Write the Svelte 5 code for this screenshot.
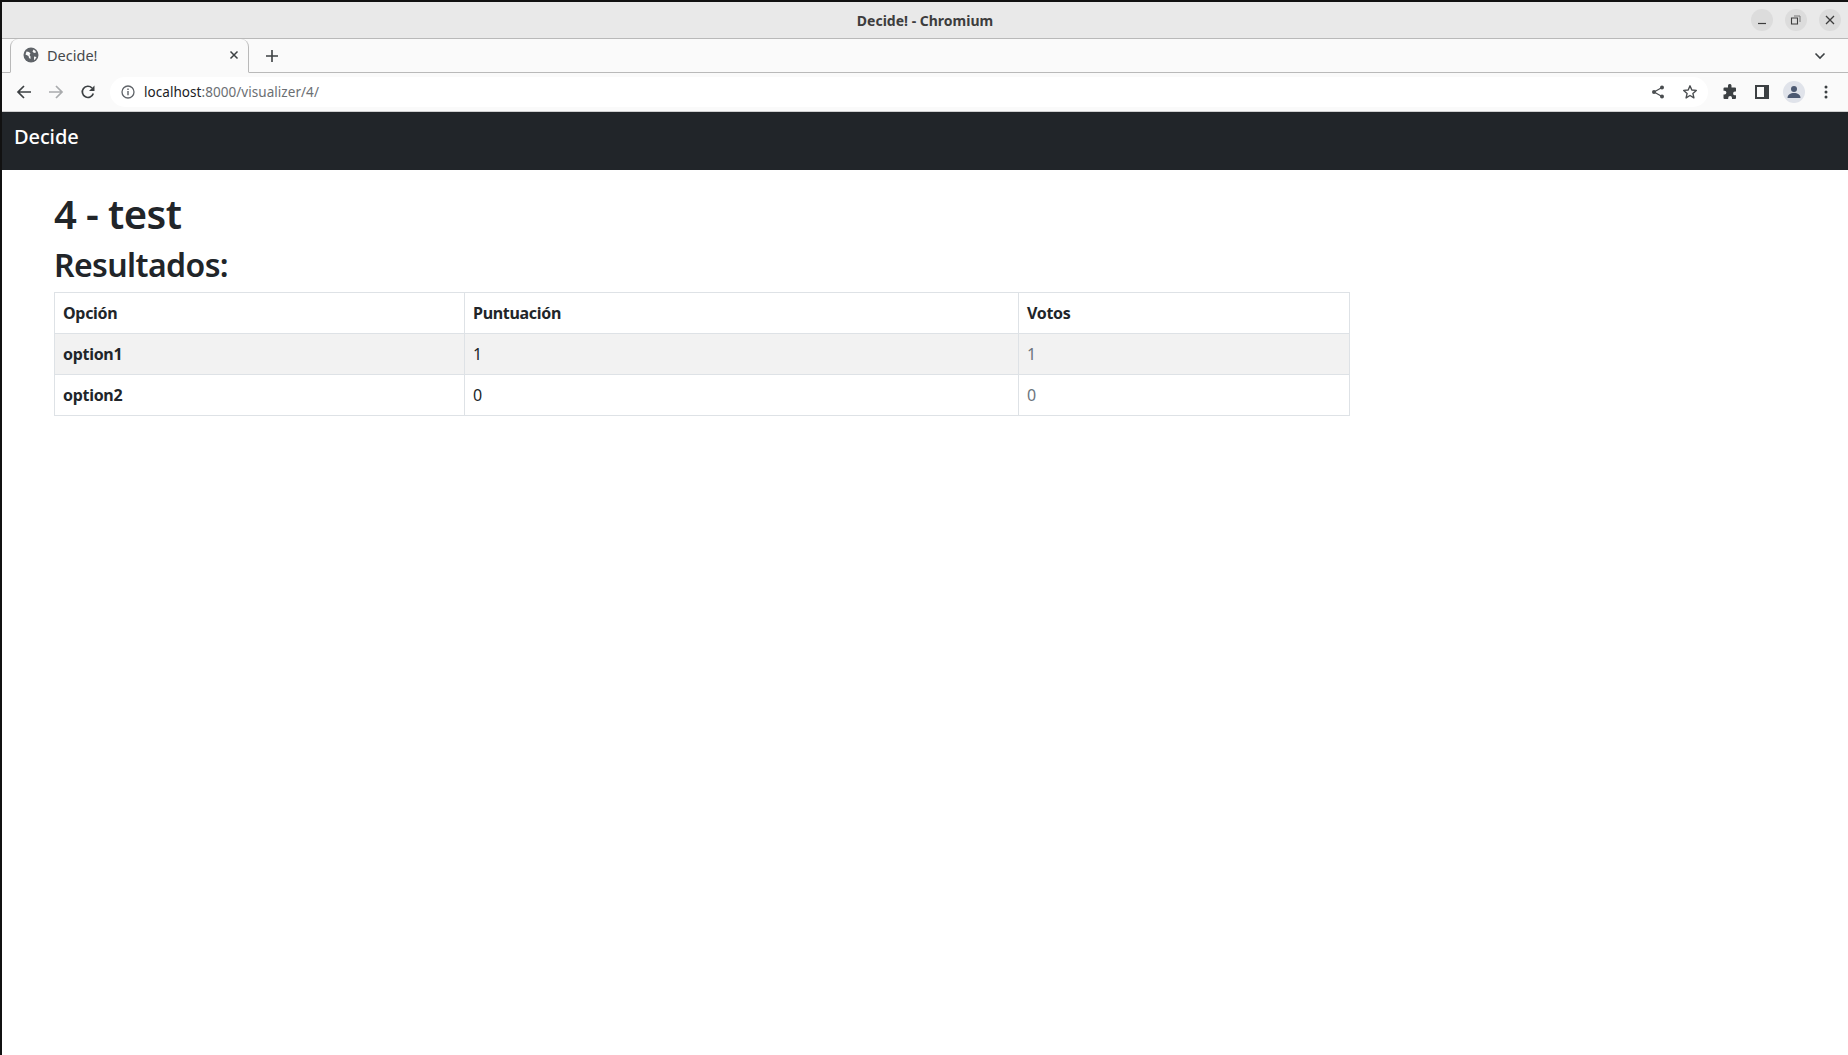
<script>
    const headers = ["Opción", "Puntuación", "Votos"];
    const rows = [
        { name: "option1", score: 1, votes: 1 },
        { name: "option2", score: 0, votes: 0 }
    ];
</script>

<div class="screen">
    <header class="titlebar">
        <span class="title">Decide! - Chromium</span>
        <div class="winbtns">
            <span class="winbtn">
                <svg width="12" height="12" viewBox="0 0 12 12"><path d="M2 9.500h8" stroke="#3d3d3d" stroke-width="1.200" fill="none"/></svg>
            </span>
            <span class="winbtn">
                <svg width="12" height="12" viewBox="0 0 12 12"><path d="M1.500 4h6v6h-6z" stroke="#3d3d3d" stroke-width="1.100" fill="none"/><path d="M4 2h6v6" stroke="#777" stroke-width="1" fill="none"/></svg>
            </span>
            <span class="winbtn">
                <svg width="12" height="12" viewBox="0 0 12 12"><path d="M2 2l8 8M10 2l-8 8" stroke="#3d3d3d" stroke-width="1.300" fill="none"/></svg>
            </span>
        </div>
    </header>

    <div class="tabstrip">
        <div class="tab">
            <svg class="globe" width="16" height="16" viewBox="0 0 16 16">
                <circle cx="8" cy="8" r="7.500" fill="#5f6368"/>
                <path d="M3.500 4.500l2.500 .5 1.500 1.500-1 1.500 1 1.500v2.500L6 11 5.500 9 2.500 7.500zM10.500 2.500l2 1.500 .5 1.500-2 .5-1.500-1.500zM11 9.500l2.500 .5-1.500 2.500-1 .5z" fill="#fafafa"/>
            </svg>
            <span class="tabtitle">Decide!</span>
            <svg width="12" height="12" viewBox="0 0 12 12"><path d="M2.500 2.500l7 7M9.500 2.500l-7 7" stroke="#3c4043" stroke-width="1.500" fill="none"/></svg>
        </div>
        <svg class="plus" width="14" height="14" viewBox="0 0 14 14"><path d="M7 1v12M1 7h12" stroke="#3c4043" stroke-width="1.600" fill="none"/></svg>
        <svg class="chevron" width="12" height="8" viewBox="0 0 12 8"><path d="M1.500 1.500L6 6l4.500-4.500" stroke="#3c4043" stroke-width="1.600" fill="none"/></svg>
    </div>

    <div class="toolbar">
        <svg class="nav" width="16" height="16" viewBox="0 0 16 16"><path d="M15 8H2M8 2L2 8l6 6" stroke="#3c4043" stroke-width="1.700" fill="none"/></svg>
        <svg class="nav" width="16" height="16" viewBox="0 0 16 16"><path d="M1 8h13M8 2l6 6-6 6" stroke="#a9abad" stroke-width="1.700" fill="none"/></svg>
        <svg class="nav" width="16" height="16" viewBox="0 0 16 16"><path d="M13.300 9.500A5.600 5.600 0 1 1 12 4" stroke="#3c4043" stroke-width="1.700" fill="none"/><path d="M14.500 1.500v5.500H9z" fill="#3c4043"/></svg>
        <div class="omnibox">
            <svg width="14" height="14" viewBox="0 0 14 14"><circle cx="7" cy="7" r="6" stroke="#5f6368" stroke-width="1.300" fill="none"/><path d="M7 6v4.200M7 3.500v1.400" stroke="#5f6368" stroke-width="1.400"/></svg>
            <span class="url"><span class="host">localhost</span>:8000/visualizer/4/</span>
            <span class="spacer"></span>
            <svg class="share" width="14" height="14" viewBox="0 0 14 14"><path d="M11 2.500L3 7l8 4.500" stroke="#4a4d50" stroke-width="1.200" fill="none"/><circle cx="11" cy="2.500" r="2" fill="#4a4d50"/><circle cx="3" cy="7" r="2" fill="#4a4d50"/><circle cx="11" cy="11.500" r="2" fill="#4a4d50"/></svg>
            <svg width="16" height="16" viewBox="0 0 16 16"><path d="M8 1.800l1.800 4.200 4.500.4-3.400 3 1 4.500L8 11.500l-3.900 2.400 1-4.500-3.400-3 4.500-.4z" stroke="#4a4d50" stroke-width="1.400" fill="none" stroke-linejoin="round"/></svg>
        </div>
        <div class="tools">
            <span class="slot">
                <svg width="16" height="16" viewBox="0 0 16 16"><path d="M6 1.500a1.800 1.800 0 0 1 3.500 0V3.500h3.500a1 1 0 0 1 1 1V7.500h-1a1.900 1.900 0 0 0 0 3.800h1v2.700a1 1 0 0 1-1 1H10v-1a1.900 1.900 0 0 0-3.800 0v1H2.500a1 1 0 0 1-1-1V10.500h1a1.900 1.900 0 0 0 0-3.800h-1V4.500a1 1 0 0 1 1-1H6z" fill="#3c4043"/></svg>
            </span>
            <span class="slot">
                <svg width="14" height="14" viewBox="0 0 14 14"><path d="M0 0h14v14H0z" fill="#3c4043"/><path d="M2 2h7v10H2z" fill="#fafafa"/></svg>
            </span>
            <span class="slot">
                <span class="avatar">
                    <svg width="14" height="14" viewBox="0 0 14 14"><circle cx="7" cy="4" r="3" fill="#4d5a72"/><path d="M0.500 13c0-3.500 3-5 6.500-5s6.500 1.500 6.500 5z" fill="#4d5a72"/></svg>
                </span>
            </span>
            <span class="slot">
                <svg width="4" height="14" viewBox="0 0 4 14"><circle cx="2" cy="2" r="1.500" fill="#3c4043"/><circle cx="2" cy="7" r="1.500" fill="#3c4043"/><circle cx="2" cy="12" r="1.500" fill="#3c4043"/></svg>
            </span>
        </div>
    </div>

    <nav class="navbar">Decide</nav>

    <main>
        <h1>4 - test</h1>
        <h2>Resultados:</h2>
        <table>
            <colgroup>
                <col class="c1" />
                <col class="c2" />
                <col class="c3" />
            </colgroup>
            <thead>
                <tr>
                    {#each headers as h}
                        <th>{h}</th>
                    {/each}
                </tr>
            </thead>
            <tbody>
                {#each rows as row, i}
                    <tr class:odd={i % 2 === 0}>
                        <th>{row.name}</th>
                        <td>{row.score}</td>
                        <td class="muted">{row.votes}</td>
                    </tr>
                {/each}
            </tbody>
        </table>
    </main>
</div>

<style>
    :global(body) {
        margin: 0;
        background: #fff;
    }

    .screen {
        height: 1055px;
        box-sizing: border-box;
        border-top: 2px solid #111;
        border-left: 2px solid #111;
        font-family: "Noto Sans", sans-serif;
        color: #212529;
        overflow: hidden;
    }

    .titlebar {
        height: 36px;
        background: #e9e9e9;
        border-bottom: 1px solid #b9b9b9;
        display: flex;
        align-items: center;
        justify-content: center;
        position: relative;
    }

    .title {
        font-size: 14px;
        font-weight: 700;
        color: #3d3d3d;
    }

    .winbtns {
        position: absolute;
        right: 7px;
        top: 7px;
        display: flex;
        gap: 12px;
    }

    .winbtn {
        width: 22px;
        height: 22px;
        border-radius: 50%;
        background: #dcdcdc;
        display: flex;
        align-items: center;
        justify-content: center;
    }

    .tabstrip {
        height: 34px;
        background: #fafafa;
        border-bottom: 1px solid #b9b9b9;
        display: flex;
        align-items: center;
        box-sizing: border-box;
        padding-left: 8px;
        padding-right: 22px;
    }

    .tab {
        width: 239px;
        height: 34px;
        box-sizing: border-box;
        padding: 0 8px 0 12px;
        background: #fafafa;
        border: 1px solid #b9b9b9;
        border-top: none;
        border-bottom: 1px solid #fafafa;
        border-radius: 8px 8px 0 0;
        display: flex;
        align-items: center;
        gap: 8px;
    }

    .tabtitle {
        flex: 1;
        font-size: 14.5px;
        color: #45484b;
    }

    .plus {
        margin-left: 16px;
    }

    .chevron {
        margin-left: auto;
    }

    .toolbar {
        height: 38px;
        background: #fafafa;
        border-bottom: 1px solid #d0d0d0;
        display: flex;
        align-items: center;
        padding-left: 14px;
        gap: 16px;
    }

    .omnibox {
        flex: 1;
        height: 30px;
        margin-left: -2px;
        border-radius: 15px;
        background: #fff;
        display: flex;
        align-items: center;
        padding: 0 10px 0 11px;
        gap: 9px;
    }

    .url {
        font-size: 13.5px;
        letter-spacing: 0.05px;
        color: #6b6f73;
    }

    .host {
        color: #202124;
    }

    .spacer {
        flex: 1;
    }

    .share {
        margin-right: 8px;
    }

    .tools {
        display: flex;
        align-items: center;
        margin-left: -10px;
        padding-right: 6px;
    }

    .slot {
        width: 32px;
        display: flex;
        align-items: center;
        justify-content: center;
    }

    .avatar {
        width: 22px;
        height: 22px;
        border-radius: 50%;
        background: #e0e3ea;
        display: flex;
        align-items: center;
        justify-content: center;
    }

    .navbar {
        height: 58px;
        background: #212529;
        color: #fff;
        font-size: 20px;
        font-weight: 500;
        line-height: 50px;
        padding-left: 12px;
        letter-spacing: -0.1px;
    }

    main {
        padding: 20px 52px 0;
    }

    h1 {
        font-size: 40px;
        font-weight: 600;
        line-height: 48px;
        margin: 0 0 8px;
        letter-spacing: -0.6px;
    }

    h2 {
        font-size: 32px;
        font-weight: 600;
        line-height: 38px;
        margin: 0 0 8px;
        letter-spacing: -0.6px;
    }

    table {
        width: 1296px;
        border-collapse: collapse;
        table-layout: fixed;
        font-size: 16px;
    }

    .c1 {
        width: 410px;
    }

    .c2 {
        width: 554px;
    }

    th,
    td {
        border: 1px solid #dee2e6;
        padding: 8px;
        height: 24px;
        line-height: 24px;
        text-align: left;
        font-weight: 400;
    }

    th {
        font-weight: 700;
        letter-spacing: -0.3px;
    }

    tr.odd > * {
        background: #f2f2f2;
    }

    .muted {
        color: #6c757d;
    }
</style>
